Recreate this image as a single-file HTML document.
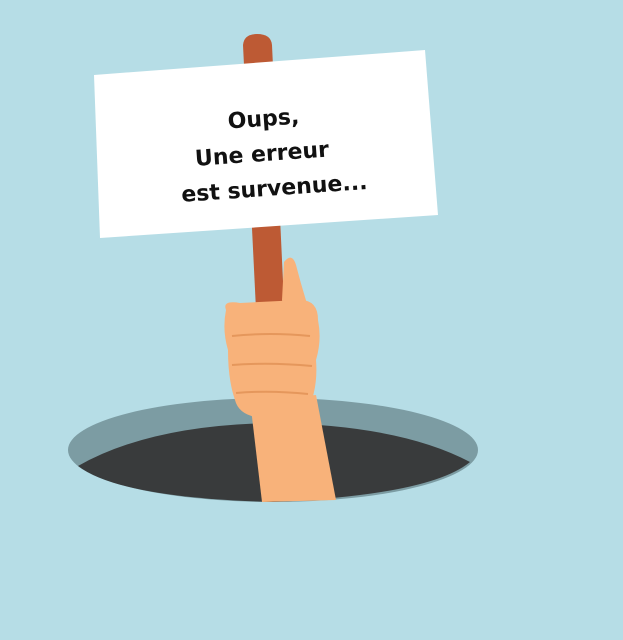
<!DOCTYPE html>
<html><head><meta charset="utf-8"><style>
html,body{margin:0;padding:0;width:623px;height:640px;overflow:hidden;background:#b6dde6}
svg{display:block}
</style></head><body>
<svg width="623" height="640" viewBox="0 0 623 640">
<rect width="623" height="640" fill="#b6dde6"/>
<ellipse cx="273" cy="450" rx="205" ry="52" fill="#7c9ca3"/>
<path d="M78 466 Q150 425 273 423 Q400 425 470 462 Q430 495 273 502 Q120 498 78 466Z" fill="#393b3c"/>
<path d="M243 45 Q244 34 257 34 Q271 34 272 45 L290 432 Q290 444 276 444 Q263 444 262 432Z" fill="#bd5a34"/>
<path d="M250 400 L316 395 L336 500 L262 502Z" fill="#f8b27a"/>
<path d="M284 262 Q292 252 296 265 Q305 300 316 330 L290 340 L282 300Z" fill="#f8b27a"/>
<path d="M226 310 Q222 300 240 303 L300 300 Q318 300 318 320 Q322 340 316 360 Q318 385 310 405 Q300 420 275 418 Q240 420 235 400 Q228 380 228 350 Q222 330 226 310Z" fill="#f8b27a"/>
<g stroke="#e5975c" stroke-width="2" fill="none">
<path d="M232 336 Q270 332 310 336"/>
<path d="M232 365 Q270 362 312 366"/>
<path d="M236 393 Q270 390 308 394"/>
</g>
<polygon points="94,75 425,50 438,215 100,238" fill="#fff"/>
<g transform="rotate(-4 265 155)" font-family="'DejaVu Sans','Liberation Sans',sans-serif" font-size="22" font-weight="bold" fill="#111" text-anchor="middle">
<text x="266" y="126">Oups,</text>
<text x="262" y="161">Une erreur</text>
<text x="272" y="196">est survenue...</text>
</g>
</svg>
</body></html>
